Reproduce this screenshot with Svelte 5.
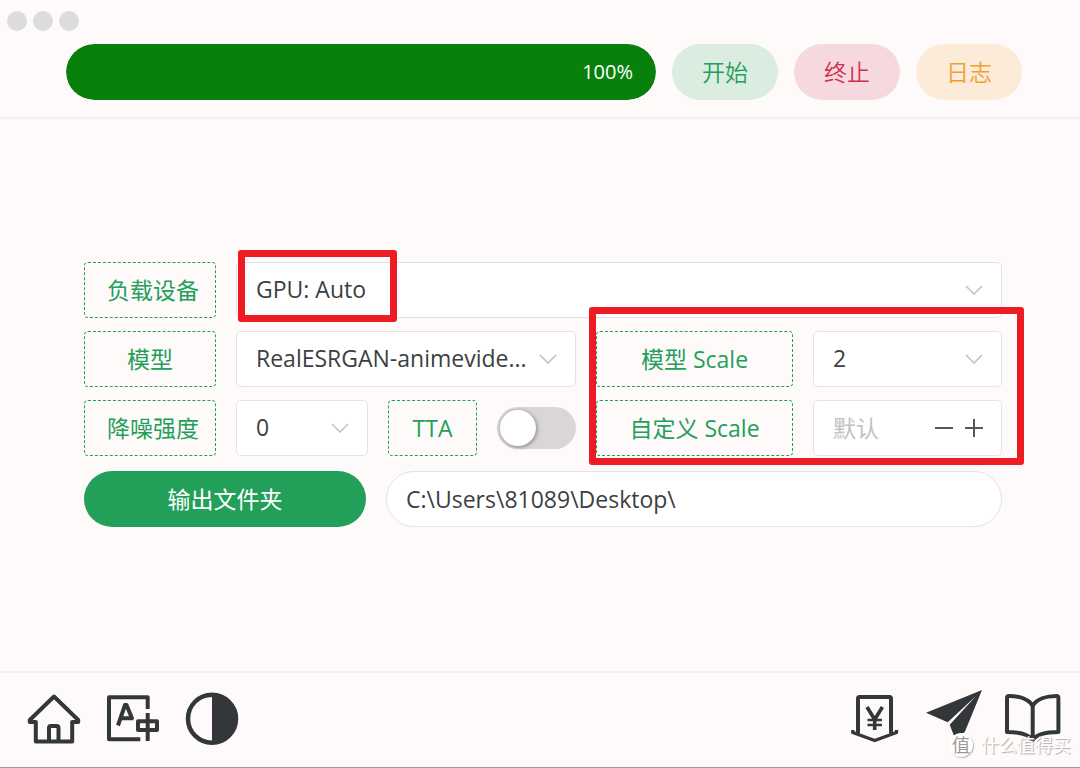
<script>
  let progress = $state(100);
  let device = $state('GPU: Auto');
  let model = $state('RealESRGAN-animevide...');
  let scale = $state('2');
  let denoise = $state('0');
  let tta = $state(false);
  let customScale = $state('');
  let output = $state('C:\\Users\\81089\\Desktop\\');

  const step = (n) => (customScale = String(Math.max(0, (Number(customScale) || 0) + n)));
</script>

{#snippet chevron()}
  <svg class="chevron" viewBox="0 0 18 10" aria-hidden="true"><path d="M1 1l8 8 8-8" /></svg>
{/snippet}

<div class="page">
  <header>
    <div class="dots"><i></i><i></i><i></i></div>
    <div class="toolbar">
      <div class="track" role="progressbar" aria-valuenow={progress}>
        <div class="bar" style="width: {progress}%">{progress}%</div>
      </div>
      <button class="action start">开始</button>
      <button class="action stop">终止</button>
      <button class="action log">日志</button>
    </div>
  </header>

  <main>
    <div class="form">
      <label class="tag" for="device">负载设备</label>
      <div class="field full">
        <select id="device" bind:value={device}><option>GPU: Auto</option></select>
        {@render chevron()}
        <div class="mark mark-device"></div>
      </div>

      <label class="tag" for="model">模型</label>
      <div class="field model">
        <select id="model" bind:value={model}><option>RealESRGAN-animevide...</option></select>
        {@render chevron()}
      </div>
      <label class="tag" for="scale">模型 Scale</label>
      <div class="field">
        <select id="scale" bind:value={scale}><option>2</option></select>
        {@render chevron()}
      </div>

      <label class="tag" for="denoise">降噪强度</label>
      <div class="field">
        <select id="denoise" bind:value={denoise}><option>0</option></select>
        {@render chevron()}
      </div>
      <label class="tag" for="tta">TTA</label>
      <input id="tta" class="switch" type="checkbox" bind:checked={tta} />
      <label class="tag" for="custom">自定义 Scale</label>
      <div class="field stepper">
        <input id="custom" type="text" placeholder="默认" bind:value={customScale} />
        <button onclick={() => step(-1)}>
          <svg viewBox="0 0 20 20"><path d="M1 10h18" /></svg>
        </button>
        <button onclick={() => step(1)}>
          <svg viewBox="0 0 20 20"><path d="M1 10h18M10 1v18" /></svg>
        </button>
      </div>
      <div class="mark mark-scale"></div>
    </div>

    <div class="output">
      <button>输出文件夹</button>
      <input type="text" bind:value={output} />
    </div>
  </main>

  <footer>
    <nav>
      <button>
        <svg viewBox="0 0 56 56">
          <path d="M28 5.5L3.8 29v2h6v19.5h36.4V31h6v-2z" />
          <path d="M23 50V37q0-2 2-2h5.500q2 0 2 2v13" />
        </svg>
      </button>
      <button>
        <svg viewBox="0 0 56 56">
          <path d="M42.700 18V6.300H4v42h31.300" />
          <path d="M13 34.500L20 14h1.500L27 27.300H16" />
          <path d="M33 30.300h19v8.700H33zM42.700 22v28" />
        </svg>
      </button>
      <button>
        <svg viewBox="0 0 56 56">
          <circle cx="28" cy="27.700" r="24" stroke-width="4.500" />
          <path class="solid" d="M28 3.500a24.200 24.200 0 0 1 0 48.400z" />
        </svg>
      </button>
    </nav>
    <nav>
      <button>
        <svg viewBox="0 0 56 56">
          <path d="M11 42V7.500q0-1.500 1.500-1.500h30q1.500 0 1.500 1.500V42" />
          <path d="M5.800 39v2.500l21.900 8 21.800-8V39" stroke-width="3.400" />
          <path d="M20 16l7.700 12.500L35.400 16M27.700 28v11" stroke-width="3.600" />
          <path d="M20.500 29h14.400M20.500 34h14.400" stroke-width="2.400" />
        </svg>
      </button>
      <button>
        <svg viewBox="0 0 56 56">
          <path class="solid" d="M56-1L0 21.700l21.700 9.600L50 5 23.700 33.700 30 50l9-9.500z" />
        </svg>
      </button>
      <button>
        <svg viewBox="0 0 56 56">
          <path d="M27.700 15C24 8 14 5 4 5Q2 5 2 7v34c10 0 21 1 25.700 8C32.400 42 43.400 41 53.400 41V7q0-2-2-2C41.400 5 31.400 8 27.700 15v34" />
        </svg>
      </button>
    </nav>
    <div class="watermark"><b>值</b><span>什么值得买</span></div>
  </footer>
</div>

<style>
  :global(body) {
    margin: 0;
    background: #fffafa;
  }
  .page {
    display: flex;
    flex-direction: column;
    min-height: 100vh;
    box-sizing: border-box;
    border-bottom: 1px solid #999;
    font: 23px/32px 'Open Sans', 'Noto Sans CJK SC', sans-serif;
    color: #3c3f43;
  }
  .page * {
    box-sizing: border-box;
  }
  button,
  input,
  select {
    font: inherit;
    color: inherit;
    margin: 0;
    padding: 0;
    border: 0;
    background: none;
    outline: 0;
  }
  header {
    padding: 11px 58px 17px 66px;
    border-bottom: 2px solid #f0f0f5;
  }
  .dots {
    display: flex;
    gap: 6px;
    margin: 0 0 13px -59px;
  }
  .dots i {
    width: 20px;
    height: 20px;
    border-radius: 50%;
    background: #dcdcdc;
  }
  .toolbar {
    display: flex;
    gap: 16px;
  }
  .track {
    flex: 1;
    height: 56px;
    border-radius: 28px;
    overflow: hidden;
  }
  .bar {
    height: 100%;
    padding-right: 23px;
    background: #07800c;
    border-radius: 28px;
    color: #fff;
    font-size: 20px;
    line-height: 56px;
    text-align: right;
  }
  .action {
    width: 106px;
    height: 56px;
    border-radius: 28px;
    font-weight: 350;
  }
  .start {
    background: #daede0;
    color: #22a05a;
  }
  .stop {
    background: #f6d9df;
    color: #d03050;
  }
  .log {
    background: #fdebd9;
    color: #f0a030;
  }
  main {
    flex: 1;
    display: flex;
    flex-direction: column;
    justify-content: center;
    gap: 15px;
    padding: 0 78px 2px 84px;
  }
  .form {
    position: relative;
    display: grid;
    grid-template-columns: 132fr 132fr 89fr 79fr 197fr 189fr;
    grid-auto-rows: 56px;
    gap: 13px 20px;
  }
  .tag {
    display: flex;
    min-width: 0;
    align-items: center;
    justify-content: safe center;
    padding: 0 22px;
    border: 1px dashed #22a05a;
    border-radius: 4px;
    color: #22a05a;
    white-space: pre;
  }
  .field {
    position: relative;
    display: flex;
    min-width: 0;
    align-items: center;
    border: 1px solid #e2e2e8;
    border-radius: 5px;
    background: #fff;
  }
  .full {
    grid-column: span 5;
  }
  .model {
    grid-column: span 3;
  }
  select {
    appearance: none;
    width: 100%;
    height: 100%;
    padding: 0 0 2px 19px;
  }
  .chevron {
    position: absolute;
    right: 18px;
    width: 18px;
    height: 10px;
    pointer-events: none;
    fill: none;
    stroke: #c5c5c5;
    stroke-width: 1.7;
  }
  .switch {
    appearance: none;
    align-self: center;
    width: 100%;
    height: 42px;
    padding: 3px;
    border-radius: 21px;
    background: #dad6d6;
  }
  .switch::before {
    content: '';
    display: block;
    width: 36px;
    height: 36px;
    border-radius: 50%;
    background: #fff;
    box-shadow: 1px 1px 4px #0006;
  }
  .switch:checked {
    background: #22a05a;
  }
  .switch:checked::before {
    margin-left: auto;
  }
  .stepper {
    gap: 10px;
    padding: 0 17px 0 19px;
  }
  .stepper input {
    flex: 1;
    min-width: 0;
  }
  ::placeholder {
    color: #c2c2c2;
    opacity: 1;
  }
  .stepper button,
  .stepper svg {
    display: block;
    width: 20px;
    height: 20px;
    stroke: #55585b;
    stroke-width: 2;
  }
  .mark {
    position: absolute;
    border: 7px solid #ed1c24;
    border-radius: 3px;
    pointer-events: none;
  }
  .mark-device {
    left: 1px;
    top: -13px;
    width: 159px;
    height: 72px;
  }
  .mark-scale {
    grid-area: 2 / 5 / 4 / 7;
    inset: -24px -22px -9px -7px;
  }
  .output {
    display: grid;
    grid-template-columns: 282fr 616fr;
    gap: 20px;
  }
  .output button {
    height: 56px;
    border-radius: 28px;
    background: #22a05a;
    color: #fff;
  }
  .output input {
    min-width: 0;
    height: 56px;
    padding: 0 19px;
    border: 1px solid #e2e2e8;
    border-radius: 28px;
    background: #fff;
  }
  footer {
    position: relative;
    display: flex;
    justify-content: space-between;
    padding: 18px 19px 20px 26px;
    border-top: 2px solid #f0f0f5;
  }
  nav {
    display: flex;
    gap: 23px;
  }
  nav button,
  nav svg {
    display: block;
    width: 56px;
    height: 56px;
    overflow: visible;
    fill: none;
    stroke: #33373a;
    stroke-width: 4;
    stroke-linejoin: round;
  }
  .solid {
    fill: #33373a;
    stroke: none;
  }
  .watermark {
    position: absolute;
    right: 9px;
    bottom: 10px;
    display: flex;
    align-items: center;
    gap: 8px;
    font-size: 18px;
    line-height: 24px;
    color: #fff;
    text-shadow: 1px 1px 1px #aaa;
  }
  .watermark b {
    width: 24px;
    height: 24px;
    border-radius: 50%;
    background: #fff;
    box-shadow: 1px 1px 1px #bbb;
    color: #999;
    font-size: 18px;
    font-weight: 400;
    text-align: center;
    text-shadow: none;
  }
</style>
